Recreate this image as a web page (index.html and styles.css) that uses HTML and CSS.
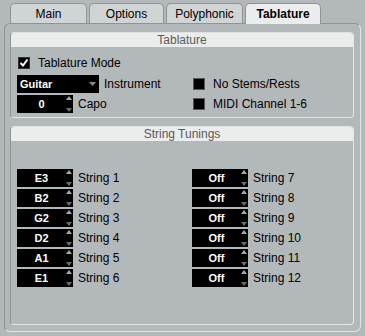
FILE: index.html
```html
<!DOCTYPE html>
<html>
<head>
<meta charset="utf-8">
<link rel="stylesheet" href="styles.css">
</head>
<body>
<div class="tabs">
  <div class="tab tab-main">Main</div>
  <div class="tab tab-options">Options</div>
  <div class="tab tab-poly">Polyphonic</div>
  <div class="tab tab-tab active">Tablature</div>
</div>
<div class="panel">
  <div class="group group-top">
    <div class="group-head">Tablature</div>
    <div class="group-body grid-top">
      <div class="row">
        <span class="check checked"><svg width="12" height="12" viewBox="0 0 12 12"><polyline points="2.5,6 5,8.5 9.5,2.5" fill="none" stroke="#fff" stroke-width="2"/></svg></span>
        <span class="label">Tablature Mode</span>
      </div>
      <div class="row"></div>
      <div class="row">
        <span class="dropdown"><span class="val-left">Guitar</span><svg class="dd-arrow" width="7" height="4" viewBox="0 0 7 4"><polygon points="0,0 7,0 3.5,4" fill="#8c8c8c"/></svg></span>
        <span class="label">Instrument</span>
      </div>
      <div class="row">
        <span class="check"></span>
        <span class="label">No Stems/Rests</span>
      </div>
      <div class="row">
        <span class="spin"><span class="val">0</span><svg class="arrows" width="6" height="18" viewBox="0 0 6 18"><polygon points="0,5 6,5 3,1" fill="#a8a8a8"/><polygon points="0,13 6,13 3,17" fill="#6e6e6e"/></svg></span>
        <span class="label">Capo</span>
      </div>
      <div class="row">
        <span class="check"></span>
        <span class="label">MIDI Channel 1-6</span>
      </div>
    </div>
  </div>
  <div class="group group-bottom">
    <div class="group-head">String Tunings</div>
    <div class="group-body grid-strings">
      <div class="col">
        <div class="row"><span class="spin"><span class="val">E3</span><svg class="arrows" width="6" height="18" viewBox="0 0 6 18"><polygon points="0,5 6,5 3,1" fill="#a8a8a8"/><polygon points="0,13 6,13 3,17" fill="#6e6e6e"/></svg></span><span class="label">String 1</span></div>
        <div class="row"><span class="spin"><span class="val">B2</span><svg class="arrows" width="6" height="18" viewBox="0 0 6 18"><polygon points="0,5 6,5 3,1" fill="#a8a8a8"/><polygon points="0,13 6,13 3,17" fill="#6e6e6e"/></svg></span><span class="label">String 2</span></div>
        <div class="row"><span class="spin"><span class="val">G2</span><svg class="arrows" width="6" height="18" viewBox="0 0 6 18"><polygon points="0,5 6,5 3,1" fill="#a8a8a8"/><polygon points="0,13 6,13 3,17" fill="#6e6e6e"/></svg></span><span class="label">String 3</span></div>
        <div class="row"><span class="spin"><span class="val">D2</span><svg class="arrows" width="6" height="18" viewBox="0 0 6 18"><polygon points="0,5 6,5 3,1" fill="#a8a8a8"/><polygon points="0,13 6,13 3,17" fill="#6e6e6e"/></svg></span><span class="label">String 4</span></div>
        <div class="row"><span class="spin"><span class="val">A1</span><svg class="arrows" width="6" height="18" viewBox="0 0 6 18"><polygon points="0,5 6,5 3,1" fill="#a8a8a8"/><polygon points="0,13 6,13 3,17" fill="#6e6e6e"/></svg></span><span class="label">String 5</span></div>
        <div class="row"><span class="spin"><span class="val">E1</span><svg class="arrows" width="6" height="18" viewBox="0 0 6 18"><polygon points="0,5 6,5 3,1" fill="#a8a8a8"/><polygon points="0,13 6,13 3,17" fill="#6e6e6e"/></svg></span><span class="label">String 6</span></div>
      </div>
      <div class="col">
        <div class="row"><span class="spin"><span class="val">Off</span><svg class="arrows" width="6" height="18" viewBox="0 0 6 18"><polygon points="0,5 6,5 3,1" fill="#a8a8a8"/><polygon points="0,13 6,13 3,17" fill="#6e6e6e"/></svg></span><span class="label">String 7</span></div>
        <div class="row"><span class="spin"><span class="val">Off</span><svg class="arrows" width="6" height="18" viewBox="0 0 6 18"><polygon points="0,5 6,5 3,1" fill="#a8a8a8"/><polygon points="0,13 6,13 3,17" fill="#6e6e6e"/></svg></span><span class="label">String 8</span></div>
        <div class="row"><span class="spin"><span class="val">Off</span><svg class="arrows" width="6" height="18" viewBox="0 0 6 18"><polygon points="0,5 6,5 3,1" fill="#a8a8a8"/><polygon points="0,13 6,13 3,17" fill="#6e6e6e"/></svg></span><span class="label">String 9</span></div>
        <div class="row"><span class="spin"><span class="val">Off</span><svg class="arrows" width="6" height="18" viewBox="0 0 6 18"><polygon points="0,5 6,5 3,1" fill="#a8a8a8"/><polygon points="0,13 6,13 3,17" fill="#6e6e6e"/></svg></span><span class="label">String 10</span></div>
        <div class="row"><span class="spin"><span class="val">Off</span><svg class="arrows" width="6" height="18" viewBox="0 0 6 18"><polygon points="0,5 6,5 3,1" fill="#a8a8a8"/><polygon points="0,13 6,13 3,17" fill="#6e6e6e"/></svg></span><span class="label">String 11</span></div>
        <div class="row"><span class="spin"><span class="val">Off</span><svg class="arrows" width="6" height="18" viewBox="0 0 6 18"><polygon points="0,5 6,5 3,1" fill="#a8a8a8"/><polygon points="0,13 6,13 3,17" fill="#6e6e6e"/></svg></span><span class="label">String 12</span></div>
      </div>
    </div>
  </div>
</div>
</body>
</html>
```
FILE: styles.css
```css
* { box-sizing: border-box; }
html, body { margin: 0; padding: 0; }
body {
  width: 365px;
  height: 336px;
  background: #b3b8ba;
  font-family: "Liberation Sans", Arial, sans-serif;
  font-size: 12px;
  color: #000;
  padding: 3px 4px 0 4px;
  overflow: hidden;
}
.tabs {
  display: flex;
  gap: 2px;
  padding-left: 6px;
  height: 20px;
  position: relative;
  z-index: 2;
}
.tab {
  height: 20px;
  background: #d1d4d5;
  border: 1px solid #8e9395;
  border-bottom: none;
  border-radius: 5px 5px 0 0;
  display: flex;
  align-items: center;
  justify-content: center;
  padding-top: 1px;
}
.tab-main { width: 77px; }
.tab-options { width: 75px; }
.tab-poly { width: 77px; }
.tab-tab { width: 76px; }
.tab.active {
  background: #ebecec;
  font-weight: bold;
  height: 21px;
  padding-bottom: 1px;
}
.panel {
  height: 309px;
  border: 1px solid;
  border-color: #8e9395 #e2e4e5 #e2e4e5 #8e9395;
  border-radius: 6px;
  padding: 8px 6px 6px 5px;
  display: flex;
  flex-direction: column;
  gap: 8px;
}
.group {
  border: 1px solid;
  border-color: #dfe1e2 #e4e6e7 #e4e6e7 #8e9395;
  border-radius: 4px;
  display: flex;
  flex-direction: column;
}
.group-top { height: 86px; }
.group-bottom { flex: 1; }
.group-head {
  height: 14px;
  background: #ebecec;
  color: #5a5a5a;
  text-align: center;
  line-height: 14px;
  border-radius: 3px 3px 0 0;
}
.group-body {
  padding-left: 6px;
}
.grid-top {
  display: grid;
  grid-template-columns: 175px 1fr;
  grid-template-rows: 14px 18px 18px;
  row-gap: 3px;
  padding-top: 9px;
}
.grid-top .row:nth-child(3) { margin-top: 2px; }
.grid-top .row:nth-child(4) { margin-top: 2px; }
.grid-top .row:nth-child(5) { margin-top: 1px; }
.grid-top .row:nth-child(6) { margin-top: 1px; }
.row {
  display: flex;
  align-items: center;
  height: 18px;
}
.grid-top .row:nth-child(1), .grid-top .row:nth-child(2) { height: 14px; }
.check {
  width: 12px;
  height: 12px;
  background: #000;
  border: 1px solid #555;
  margin-left: 1px;
  margin-right: 8px;
  flex: none;
  display: flex;
}
.check.checked { border-color: #333; }
.check svg { display: block; margin: -1px; }
.dropdown {
  width: 82px;
  height: 18px;
  background: #000;
  color: #fff;
  font-weight: bold;
  font-size: 11px;
  display: flex;
  align-items: center;
  justify-content: space-between;
  padding: 0 3px 0 3px;
  margin-right: 5px;
  flex: none;
}
.dd-arrow { display: block; }
.spin {
  width: 56px;
  height: 18px;
  background: #000;
  color: #fff;
  font-weight: bold;
  font-size: 11px;
  display: flex;
  align-items: center;
  padding-right: 1px;
  margin-right: 5px;
  flex: none;
}
.spin .val {
  flex: 1;
  text-align: center;
}
.arrows { display: block; }
.grid-strings {
  display: grid;
  grid-template-columns: 175px 1fr;
  padding-top: 28px;
}
.col {
  display: flex;
  flex-direction: column;
  gap: 2px;
}
```
